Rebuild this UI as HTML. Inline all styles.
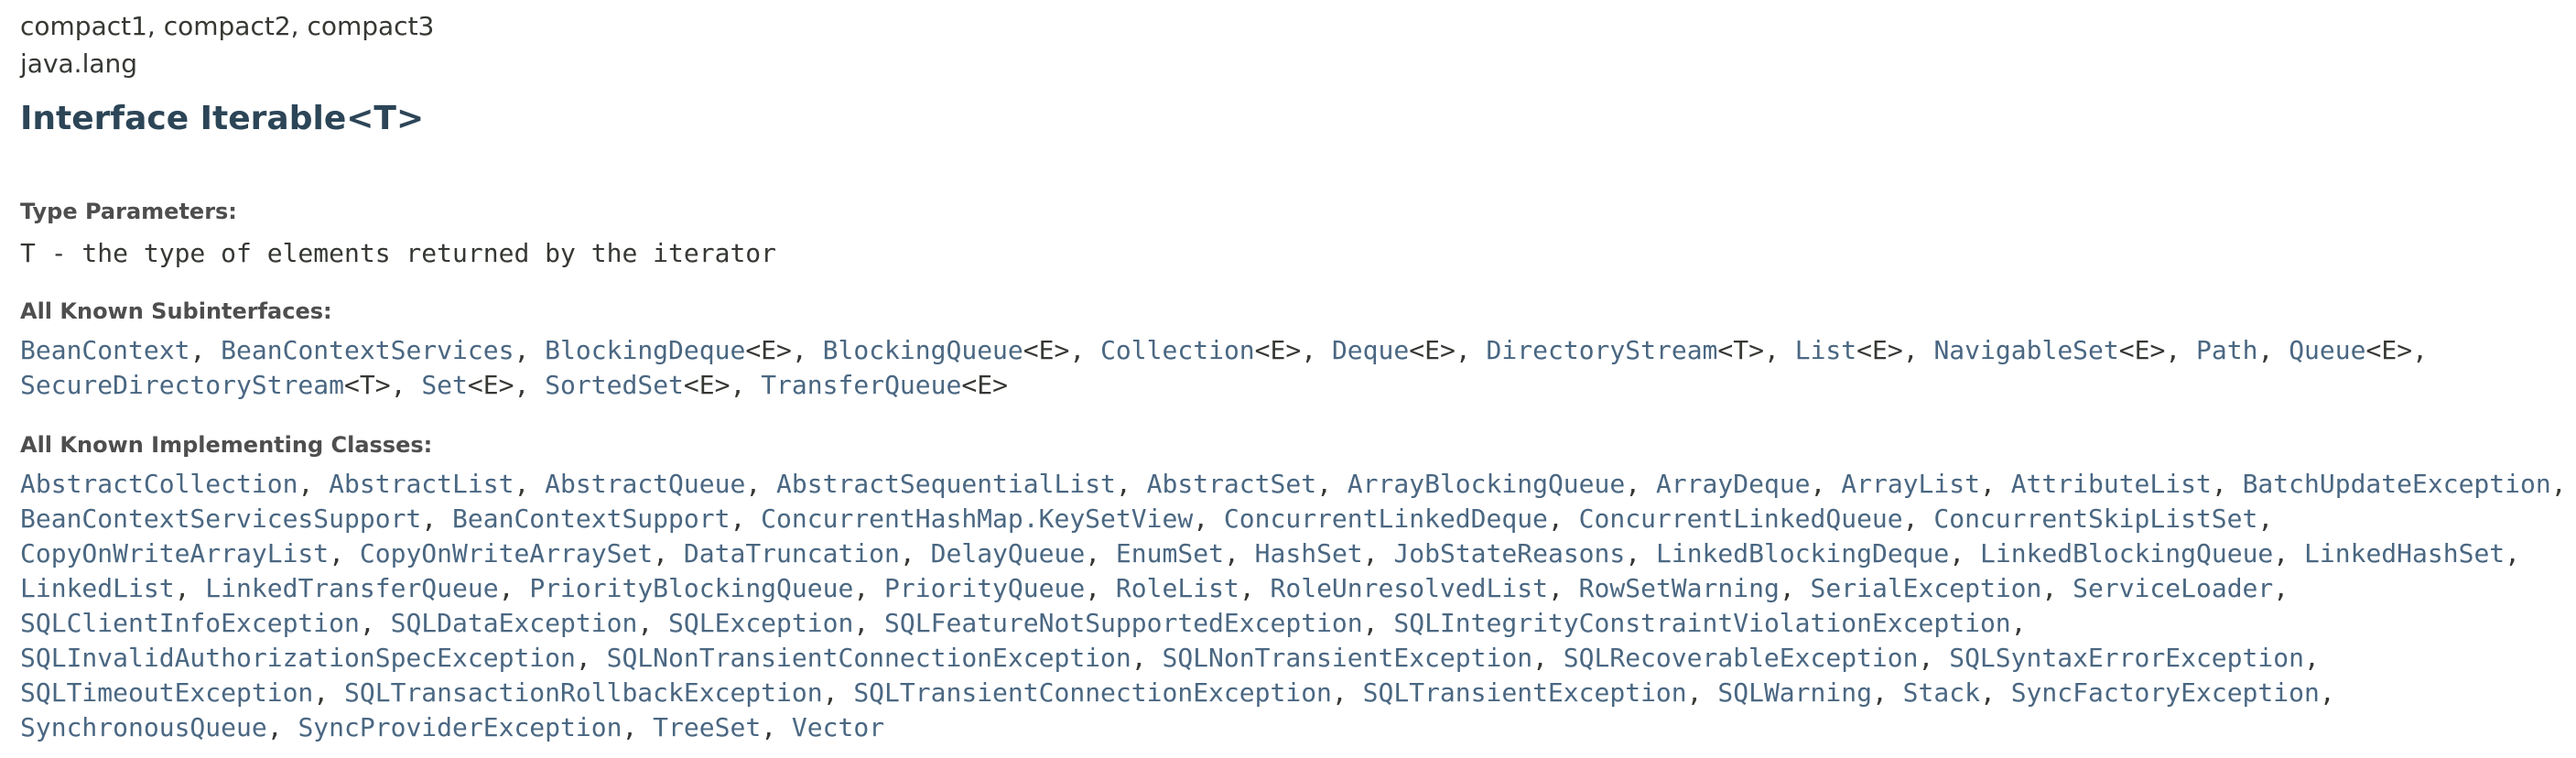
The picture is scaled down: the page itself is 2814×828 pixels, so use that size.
<!DOCTYPE html>
<html><head><meta charset="utf-8"><style>
html,body{margin:0;padding:0;background:#fff;width:2814px;height:828px;overflow:hidden}
.a{position:absolute;left:22px;white-space:nowrap;color:#353833}
.s{font-family:"DejaVu Sans","Liberation Sans",sans-serif;font-size:28px;line-height:28px}
.h{font-family:"DejaVu Sans","Liberation Sans",sans-serif;font-size:36px;line-height:36px;font-weight:bold;color:#2c4557}
.l{font-family:"DejaVu Sans","Liberation Sans",sans-serif;font-size:24px;line-height:24px;font-weight:bold;color:#4e4e4e}
.m{font-family:"DejaVu Sans Mono","Liberation Mono",monospace;font-size:28px;line-height:38px}
.m1{font-family:"DejaVu Sans Mono","Liberation Mono",monospace;font-size:28px;line-height:28px}
a{color:#4a6782;text-decoration:none}
</style></head><body>
<div class="a s" style="top:15px">compact1, compact2, compact3</div>
<div class="a s" style="top:56px">java.lang</div>
<div class="a h" style="top:112px">Interface Iterable&lt;T&gt;</div>
<div class="a l" style="top:219px">Type Parameters:</div>
<div class="a m1" style="top:263px">T - the type of elements returned by the iterator</div>
<div class="a l" style="top:328px">All Known Subinterfaces:</div>
<div class="a m" style="top:364px"><a>BeanContext</a>, <a>BeanContextServices</a>, <a>BlockingDeque</a>&lt;E&gt;, <a>BlockingQueue</a>&lt;E&gt;, <a>Collection</a>&lt;E&gt;, <a>Deque</a>&lt;E&gt;, <a>DirectoryStream</a>&lt;T&gt;, <a>List</a>&lt;E&gt;, <a>NavigableSet</a>&lt;E&gt;, <a>Path</a>, <a>Queue</a>&lt;E&gt;,<br><a>SecureDirectoryStream</a>&lt;T&gt;, <a>Set</a>&lt;E&gt;, <a>SortedSet</a>&lt;E&gt;, <a>TransferQueue</a>&lt;E&gt;</div>
<div class="a l" style="top:474px">All Known Implementing Classes:</div>
<div class="a m" style="top:510px"><a>AbstractCollection</a>, <a>AbstractList</a>, <a>AbstractQueue</a>, <a>AbstractSequentialList</a>, <a>AbstractSet</a>, <a>ArrayBlockingQueue</a>, <a>ArrayDeque</a>, <a>ArrayList</a>, <a>AttributeList</a>, <a>BatchUpdateException</a>,<br><a>BeanContextServicesSupport</a>, <a>BeanContextSupport</a>, <a>ConcurrentHashMap.KeySetView</a>, <a>ConcurrentLinkedDeque</a>, <a>ConcurrentLinkedQueue</a>, <a>ConcurrentSkipListSet</a>,<br><a>CopyOnWriteArrayList</a>, <a>CopyOnWriteArraySet</a>, <a>DataTruncation</a>, <a>DelayQueue</a>, <a>EnumSet</a>, <a>HashSet</a>, <a>JobStateReasons</a>, <a>LinkedBlockingDeque</a>, <a>LinkedBlockingQueue</a>, <a>LinkedHashSet</a>,<br><a>LinkedList</a>, <a>LinkedTransferQueue</a>, <a>PriorityBlockingQueue</a>, <a>PriorityQueue</a>, <a>RoleList</a>, <a>RoleUnresolvedList</a>, <a>RowSetWarning</a>, <a>SerialException</a>, <a>ServiceLoader</a>,<br><a>SQLClientInfoException</a>, <a>SQLDataException</a>, <a>SQLException</a>, <a>SQLFeatureNotSupportedException</a>, <a>SQLIntegrityConstraintViolationException</a>,<br><a>SQLInvalidAuthorizationSpecException</a>, <a>SQLNonTransientConnectionException</a>, <a>SQLNonTransientException</a>, <a>SQLRecoverableException</a>, <a>SQLSyntaxErrorException</a>,<br><a>SQLTimeoutException</a>, <a>SQLTransactionRollbackException</a>, <a>SQLTransientConnectionException</a>, <a>SQLTransientException</a>, <a>SQLWarning</a>, <a>Stack</a>, <a>SyncFactoryException</a>,<br><a>SynchronousQueue</a>, <a>SyncProviderException</a>, <a>TreeSet</a>, <a>Vector</a></div>
</body></html>
